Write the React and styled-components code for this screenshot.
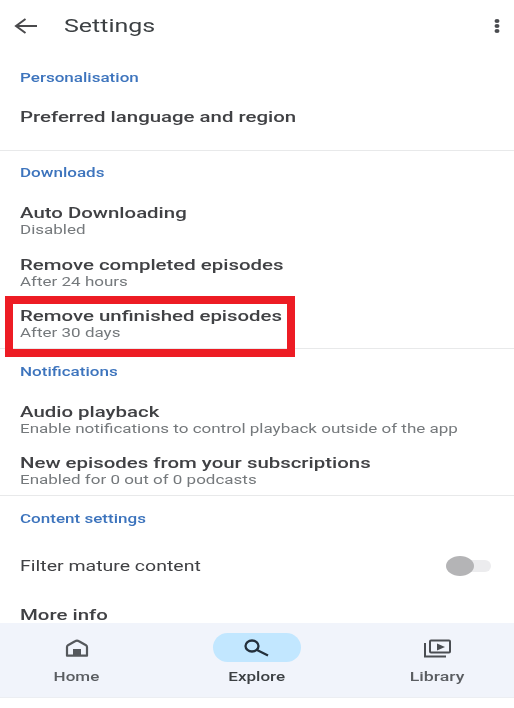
import React from "react";
import styled, { createGlobalStyle, css } from "styled-components";

const Global = createGlobalStyle`
  html, body { margin: 0; padding: 0; background: #fff; }
  body { font-family: Roboto, "Noto Sans", sans-serif; }
`;

/* The reference photo is stretched sideways, so its text is too. */
const stretched = css`
  white-space: nowrap;
  transform: scaleX(${(p) => p.$stretch ?? 1.36});
  transform-origin: left center;
`;

const Screen = styled.div`
  width: 514px;
  height: 708px;
  display: flex;
  flex-direction: column;
  overflow: hidden;
  background: #fff;
  filter: blur(0.45px);
`;

const Header = styled.header`
  height: 52px;
  flex: none;
  display: flex;
  align-items: center;
  padding: 0 13px 0 14px;
`;

const Title = styled.h1`
  margin: 0 0 0 27px;
  flex: 1;
  font-size: 18.5px;
  font-weight: 400;
  color: #3c4043;
  ${stretched}
`;

const Content = styled.main`
  flex: 1;
  min-height: 0;
  display: flex;
  flex-direction: column;
`;

const Section = styled.section`
  height: ${(p) => p.$height}px;
  flex: none;
  box-sizing: border-box;
  display: flex;
  flex-direction: column;
  border-bottom: ${(p) => (p.$divider ? "1.5px solid #e8e9ea" : "none")};
`;

const SectionTitle = styled.h2`
  margin: 0;
  box-sizing: border-box;
  height: ${(p) => p.$height}px;
  flex: none;
  padding: 1px 0 0 20px;
  line-height: ${(p) => p.$height}px;
  font-size: 13px;
  font-weight: 500;
  color: #3d74bd;
  ${stretched}
  transform-origin: 20px center;
`;

const Row = styled.div`
  position: relative;
  box-sizing: border-box;
  height: ${(p) => p.$height}px;
  flex: none;
  padding: 2px 24px 0 20px;
  display: flex;
  flex-direction: column;
  justify-content: center;
`;

const RowBetween = styled(Row)`
  flex-direction: row;
  align-items: center;
  justify-content: space-between;
`;

const LastRow = styled(Row)`
  padding-top: 18px;
  justify-content: flex-start;
`;

const Label = styled.div`
  font-size: 15px;
  line-height: ${(p) => p.$lineHeight ?? 18}px;
  font-weight: ${(p) => p.$weight ?? 500};
  color: #404144;
  ${stretched}
`;

const Sub = styled.div`
  font-size: 12.5px;
  line-height: 15px;
  color: #75797c;
  ${stretched}
`;

const Highlight = styled.div`
  position: absolute;
  left: 5px;
  top: -1px;
  width: 290px;
  height: 61px;
  box-sizing: border-box;
  border: 8px solid #ed1c24;
`;

const Switch = styled.div`
  position: relative;
  width: 36px;
  height: 12px;
  margin-right: -1px;
  border-radius: 6px;
  background: #ececee;
`;

const Knob = styled.div`
  position: absolute;
  left: -9px;
  top: -4px;
  width: 28px;
  height: 20px;
  border-radius: 50%;
  background: #b4b4b6;
`;

const Nav = styled.nav`
  height: 75px;
  flex: none;
  margin-bottom: 10px;
  display: grid;
  grid-template-columns: 153px 208px 153px;
  background: #f1f4fb;
  border-bottom: 1px solid #eceef2;
  box-sizing: border-box;
`;

const NavItem = styled.div`
  display: flex;
  flex-direction: column;
  align-items: center;
  padding-top: 10px;
  gap: 7px;
`;

const NavIcon = styled.div`
  width: 88px;
  height: 29px;
  border-radius: 15px;
  display: flex;
  align-items: center;
  justify-content: center;
  background: ${(p) => (p.$active ? "#c2e7ff" : "transparent")};
`;

const NavLabel = styled.span`
  font-size: 13px;
  font-weight: 500;
  color: ${(p) => (p.$active ? "#3c4043" : "#5a5d61")};
  ${stretched}
  transform-origin: center;
`;

const Back = () => (
  <svg width="23" height="16" viewBox="0 0 23 16" fill="none" stroke="#4a4a4c" strokeWidth="2">
    <path d="M23 8H2M11.500 1 2 8l9.500 7" />
  </svg>
);

const More = () => (
  <svg width="8" height="16" viewBox="0 0 8 16" fill="#4a4c50">
    <ellipse cx="4" cy="3" rx="2.500" ry="2" />
    <ellipse cx="4" cy="8" rx="2.500" ry="2" />
    <ellipse cx="4" cy="13" rx="2.500" ry="2" />
  </svg>
);

const HomeIcon = () => (
  <svg width="24" height="18" viewBox="0 0 24 18" fill="none">
    <path
      d="M2 16.700V8c0-.8.400-1.400 1-1.800L10 2.200c1.300-.8 2.700-.8 4 0l7 4c.6.400 1 1 1 1.800v8.700z"
      stroke="#55585c"
      strokeWidth="2.200"
      strokeLinejoin="round"
    />
    <rect x="8" y="10" width="8" height="7" fill="#55585c" />
  </svg>
);

const SearchIcon = () => (
  <svg width="26" height="18" viewBox="0 0 26 18" fill="none" stroke="#24303c" strokeWidth="2.300">
    <ellipse cx="8" cy="7" rx="6.500" ry="5.500" />
    <path d="M13 11 24 16.500" />
  </svg>
);

const LibraryIcon = () => (
  <svg width="29" height="20" viewBox="0 0 29 20" fill="none" stroke="#4a4d52" strokeWidth="2">
    <rect x="7" y="2.500" width="20" height="12" rx="1" />
    <path d="M2 5v13.500h21" />
    <path d="M14 5.500v7l8-3.500z" fill="#4a4d52" stroke="none" />
  </svg>
);

export default function App() {
  return (
    <Screen>
      <Global />
      <Header>
        <Back />
        <Title $stretch={1.35}>Settings</Title>
        <More />
      </Header>
      <Content>
        <Section $height={99} $divider>
          <SectionTitle $height={50} $stretch={1.31}>Personalisation</SectionTitle>
          <Row $height={28}>
            <Label>Preferred language and region</Label>
          </Row>
        </Section>
        <Section $height={198} $divider>
          <SectionTitle $height={42} $stretch={1.31}>Downloads</SectionTitle>
          <Row $height={53}>
            <Label>Auto Downloading</Label>
            <Sub>Disabled</Sub>
          </Row>
          <Row $height={51}>
            <Label>Remove completed episodes</Label>
            <Sub>After 24 hours</Sub>
          </Row>
          <Row $height={51}>
            <Highlight />
            <Label>Remove unfinished episodes</Label>
            <Sub>After 30 days</Sub>
          </Row>
        </Section>
        <Section $height={147} $divider>
          <SectionTitle $height={44} $stretch={1.31}>Notifications</SectionTitle>
          <Row $height={51}>
            <Label>Audio playback</Label>
            <Sub>Enable notifications to control playback outside of the app</Sub>
          </Row>
          <Row $height={50}>
            <Label>New episodes from your subscriptions</Label>
            <Sub>Enabled for 0 out of 0 podcasts</Sub>
          </Row>
        </Section>
        <Section $height={127}>
          <SectionTitle $height={44} $stretch={1.31}>Content settings</SectionTitle>
          <RowBetween $height={50}>
            <Label $weight={400} $stretch={1.3}>Filter mature content</Label>
            <Switch>
              <Knob />
            </Switch>
          </RowBetween>
          <LastRow $height={33}>
            <Label $lineHeight={14}>More info</Label>
          </LastRow>
        </Section>
      </Content>
      <Nav>
        <NavItem>
          <NavIcon><HomeIcon /></NavIcon>
          <NavLabel $stretch={1.31}>Home</NavLabel>
        </NavItem>
        <NavItem>
          <NavIcon $active><SearchIcon /></NavIcon>
          <NavLabel $active $stretch={1.31}>Explore</NavLabel>
        </NavItem>
        <NavItem>
          <NavIcon><LibraryIcon /></NavIcon>
          <NavLabel $stretch={1.36}>Library</NavLabel>
        </NavItem>
      </Nav>
    </Screen>
  );
}
